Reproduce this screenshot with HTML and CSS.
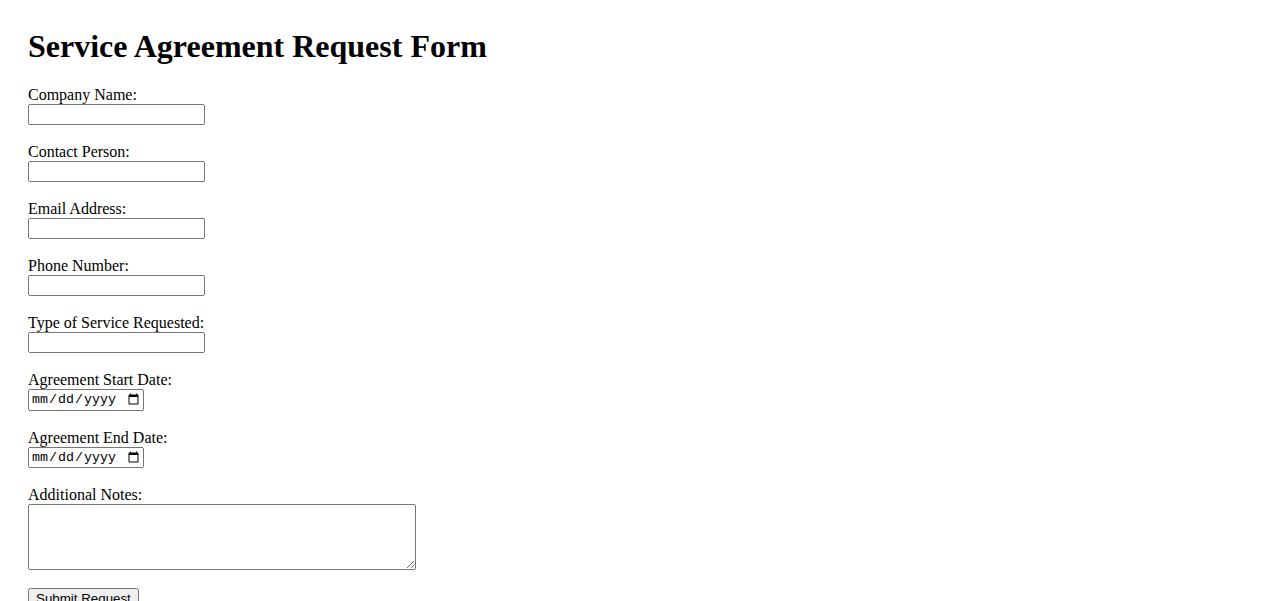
FILE: index.html
```html
<!DOCTYPE html>
<html lang="en">
<head>
  <meta charset="UTF-8" />
  <meta name="viewport" content="width=device-width, initial-scale=1.0" />
  <title>Service Agreement Request Form</title>
  <link rel="stylesheet" href="styles.css">
</head>
<body>
  <div class="page">
    <h1>Service Agreement Request Form</h1>
    <form class="form">
      <div class="field">
        <label for="company">Company Name:</label>
        <input type="text" id="company" name="company">
      </div>
      <div class="field">
        <label for="contact">Contact Person:</label>
        <input type="text" id="contact" name="contact">
      </div>
      <div class="field">
        <label for="email">Email Address:</label>
        <input type="email" id="email" name="email">
      </div>
      <div class="field">
        <label for="phone">Phone Number:</label>
        <input type="tel" id="phone" name="phone">
      </div>
      <div class="field">
        <label for="service">Type of Service Requested:</label>
        <input type="text" id="service" name="service">
      </div>
      <div class="field">
        <label for="start">Agreement Start Date:</label>
        <input type="date" id="start" name="start" class="date">
      </div>
      <div class="field">
        <label for="end">Agreement End Date:</label>
        <input type="date" id="end" name="end" class="date">
      </div>
      <div class="field">
        <label for="notes">Additional Notes:</label>
        <textarea id="notes" name="notes" rows="4"></textarea>
      </div>
      <button type="submit" class="submit">Submit Request</button>
    </form>
  </div>
</body>
</html>
```

FILE: styles.css
```css
body {
  margin: 0;
  font-family: "Liberation Serif", "Times New Roman", serif;
  font-size: 16px;
  color: #000;
  background: #fff;
}
.page {
  padding: 28px;
}
h1 {
  margin: 0 0 21px;
  font-size: 32px;
  line-height: 37px;
  font-weight: bold;
}
.form {
  display: flex;
  flex-direction: column;
  align-items: flex-start;
}
.field {
  display: flex;
  flex-direction: column;
  align-items: flex-start;
  margin-bottom: 18px;
}
.field label {
  line-height: 18px;
}
.field input {
  box-sizing: border-box;
  width: 177px;
  height: 21px;
  margin: 0;
  font-family: "Liberation Sans", Arial, sans-serif;
  font-size: 13.33px;
}
.field input.date {
  width: 116px;
  height: 21.5px;
  font-family: "Liberation Mono", "DejaVu Sans Mono", monospace;
}
.field textarea {
  box-sizing: border-box;
  width: 388px;
  height: 66px;
  margin: 0;
  font-family: "Liberation Mono", monospace;
  font-size: 13.33px;
}
.submit {
  margin: 0;
  font-family: "Liberation Sans", Arial, sans-serif;
  font-size: 13.33px;
}
```
